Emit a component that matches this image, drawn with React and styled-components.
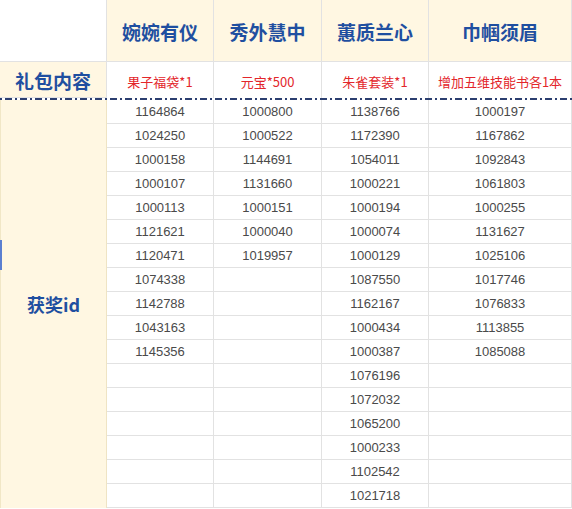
import styled, { createGlobalStyle } from 'styled-components';

const GlobalStyle = createGlobalStyle`
  html, body {
    margin: 0;
    padding: 0;
    background: #ffffff;
  }
  * {
    box-sizing: border-box;
  }
`;

const Sheet = styled.div`
  display: grid;
  grid-template-columns: 107px 107px 108px 107px 143px;
  grid-template-rows: 62px 36px 2px repeat(17, 24px);
  width: 572px;
  height: 509px;
  overflow: hidden;
  font-family: 'Liberation Sans', 'Noto Sans CJK SC', sans-serif;
`;

const Cell = styled.div`
  display: flex;
  align-items: center;
  justify-content: center;
  border-right: 1px solid #e2e2e2;
  border-bottom: 1px solid #e2e2e2;
  background: ${({ cream }) => (cream ? '#fff7e2' : '#ffffff')};
`;

const HeadCell = styled(Cell)`
  color: #1f4fa0;
  font-family: 'Noto Sans CJK SC', sans-serif;
  font-weight: 700;
  font-size: 19px;
  padding-top: 1px;
`;

const GiftCell = styled(Cell)`
  border-bottom: none;
  color: #e3262b;
  font-family: 'Noto Sans CJK SC', sans-serif;
  font-size: 13px;
  padding-top: 2px;
`;

const Divider = styled.div`
  grid-column: 1 / -1;
  background: repeating-linear-gradient(
    to right,
    #2c3f70 0 2px,
    transparent 2px 5px,
    #2c3f70 5px 12px,
    transparent 12px 15px
  );
`;

const SideLabel = styled(Cell)`
  position: relative;
  grid-row: 4 / span 17;
  grid-column: 1;
  border-left: 1px solid #f1e7c6;
  border-right: 1px solid #efe4c4;
  border-bottom: none;
  color: #1f4fa0;
  font-family: 'Noto Sans CJK SC', sans-serif;
  font-weight: 700;
  font-size: 18px;
`;

const Marker = styled.span`
  position: absolute;
  left: -1px;
  top: 140px;
  width: 2px;
  height: 30px;
  background: #5b7fd0;
`;

const NumCell = styled(Cell)`
  color: #4a4a4a;
  font-size: 13px;
`;

const prizes = ['婉婉有仪', '秀外慧中', '蕙质兰心', '巾帼须眉'];
const gifts = ['果子福袋*1', '元宝*500', '朱雀套装*1', '增加五维技能书各1本'];

const winners = [
  ['1164864', '1024250', '1000158', '1000107', '1000113', '1121621', '1120471', '1074338', '1142788', '1043163', '1145356'],
  ['1000800', '1000522', '1144691', '1131660', '1000151', '1000040', '1019957'],
  ['1138766', '1172390', '1054011', '1000221', '1000194', '1000074', '1000129', '1087550', '1162167', '1000434', '1000387', '1076196', '1072032', '1065200', '1000233', '1102542', '1021718'],
  ['1000197', '1167862', '1092843', '1061803', '1000255', '1131627', '1025106', '1017746', '1076833', '1113855', '1085088'],
];

const ROWS = 17;

function App() {
  return (
    <>
      <GlobalStyle />
      <Sheet>
        <Cell />
        {prizes.map((p) => (
          <HeadCell key={p} cream>
            {p}
          </HeadCell>
        ))}

        <HeadCell cream>礼包内容</HeadCell>
        {gifts.map((g) => (
          <GiftCell key={g}>{g}</GiftCell>
        ))}

        <Divider />

        <SideLabel cream>
          <Marker />
          获奖id
        </SideLabel>
        {Array.from({ length: ROWS }).map((_, row) =>
          winners.map((col, c) => <NumCell key={row + '-' + c}>{col[row] || ''}</NumCell>)
        )}
      </Sheet>
    </>
  );
}

export default App;
